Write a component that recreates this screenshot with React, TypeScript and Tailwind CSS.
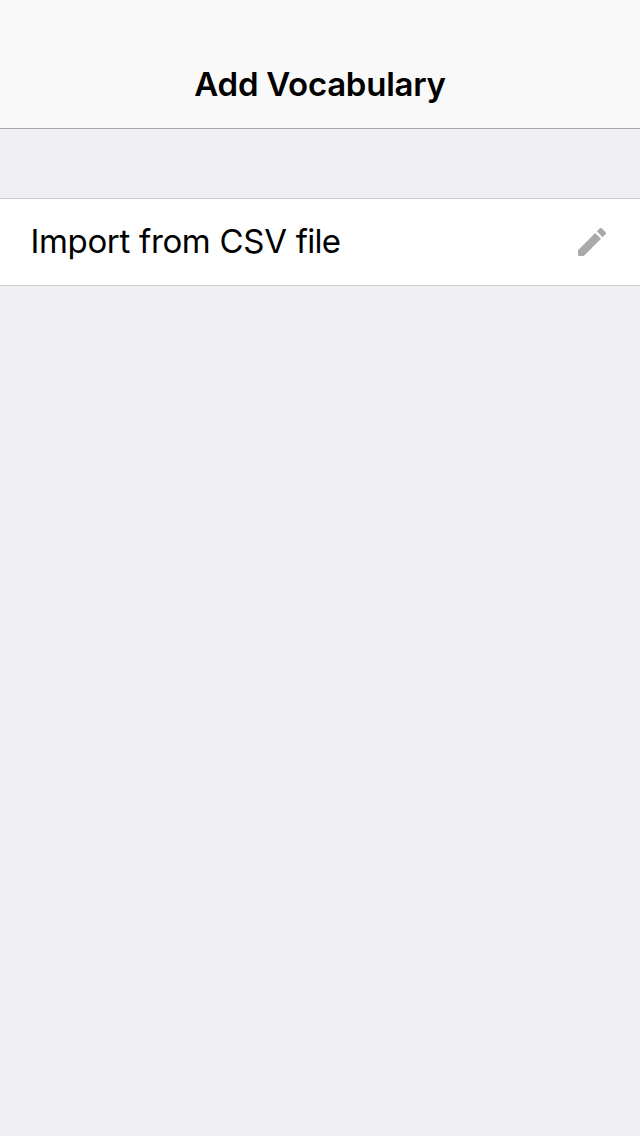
import React from "react";

export default function App() {
  return (
    <div className="flex h-[1136px] w-[640px] flex-col bg-[#efeff4] font-['Inter',sans-serif] text-black">
      <header className="flex h-[129px] items-end justify-center border-b border-[#a7a7aa] bg-[#f9f9f9] pb-[22px]">
        <h1 className="text-[33px] leading-[44px] font-semibold tracking-[-0.27px]">Add Vocabulary</h1>
      </header>
      <main className="pt-[69px]">
        <button className="flex h-[88px] w-full items-center justify-between border-y border-[#c8c7cc] bg-white pr-[34px] pl-[30.5px]">
          <span className="pb-[2px] text-[33px] leading-[44px] tracking-[-0.36px] [word-spacing:0.3px]">
            Import from CSV <span className="tracking-[-0.75px]">file</span>
          </span>
          <svg viewBox="64 64 384 384" className="size-[28px] fill-[#aaaaaa]" aria-hidden="true">
            <path d="M64 368v66q0 14 14 14h66l235.7-235.7-80-80L64 368zm377.6-217.6c8.5-8.5 8.5-21.3 0-29.9l-50.1-50.1c-8.5-8.5-21.3-8.5-29.9 0l-39.5 39.5 80 80 39.5-39.5z" />
          </svg>
        </button>
      </main>
    </div>
  );
}
